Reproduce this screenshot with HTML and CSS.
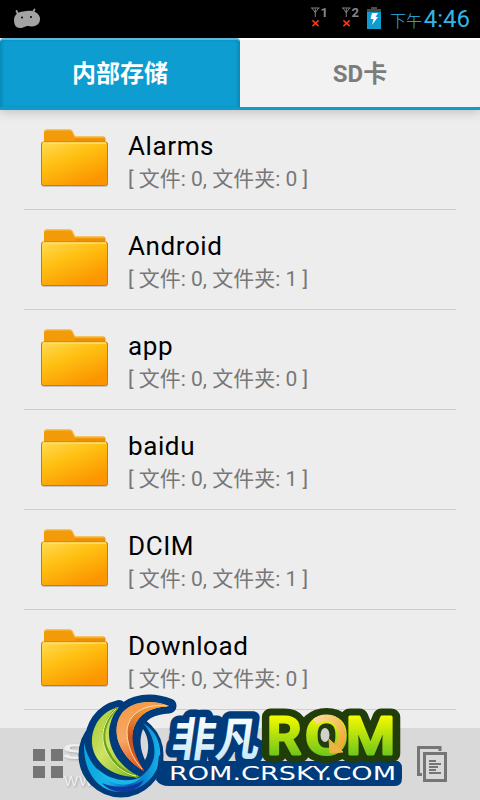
FILE: index.html
```html
<!DOCTYPE html>
<html lang="zh-CN">
<head>
<meta charset="utf-8">
<meta name="viewport" content="width=device-width, initial-scale=1">
<title>内部存储</title>
<link rel="stylesheet" href="styles.css">
</head>
<body>

<header class="status-bar">
  <svg class="robot" width="28" height="22" viewBox="0 0 28 22">
    <path d="M1 12C1 7 5 4 10 3.500C15 2.500 20 2.500 23 4.500C27 7 28 11 26 15C24 18 20 19 15 18C12 18 11 20 7 20C3 20 1 17 1 12Z" fill="#a3a3a3"/>
    <path d="M5 6L3.500 3M20 4L21.500 1.500" stroke="#a3a3a3" stroke-width="1.800" stroke-linecap="round"/>
    <circle cx="9" cy="9.500" r="1"/>
    <circle cx="18" cy="9" r="1"/>
  </svg>
  <div class="signal">
    <svg width="10" height="22" viewBox="0 0 10 22" fill="none">
      <path d="M0 .5H9M1 .5L4.500 5.500L8 .5M4.500 1V10" stroke="#858585"/>
      <path d="M1.500 13.500L8 19.500M8 13.500L1.500 19.500" stroke="#ff3a18" stroke-width="1.500"/>
    </svg>
    <span>1</span>
  </div>
  <div class="signal second">
    <svg width="10" height="22" viewBox="0 0 10 22" fill="none">
      <path d="M0 .5H9M1 .5L4.500 5.500L8 .5M4.500 1V10" stroke="#858585"/>
      <path d="M1.500 13.500L8 19.500M8 13.500L1.500 19.500" stroke="#ff3a18" stroke-width="1.500"/>
    </svg>
    <span>2</span>
  </div>
  <svg class="battery" width="14" height="22" viewBox="0 0 14 22">
    <path d="M4 0H10V2H14V5H0V2H4Z" fill="#4b4b4b"/>
    <path d="M0 5H14V22H0Z" fill="#109bce"/>
    <path d="M5 6H11L8.500 10H11L5 18L6.500 12H3.500Z" fill="#fff"/>
  </svg>
  <div class="clock"><span class="period">下午</span><span class="time">4:46</span></div>
</header>

<nav class="tabs">
  <a class="tab active">内部存储</a>
  <a class="tab">SD卡</a>
</nav>

<svg width="0" height="0" class="defs">
  <defs>
    <linearGradient id="front" x1="0" y1="0" x2="0.600" y2="1">
      <stop offset="0" stop-color="#ffdb55"/>
      <stop offset="0.450" stop-color="#ffc012"/>
      <stop offset="1" stop-color="#fb9500"/>
    </linearGradient>
    <symbol id="folder" viewBox="0 0 70 62">
      <path d="M1 56Q1 59 4 59H65Q68 59 68 56Z" fill="#aaa" opacity="0.600"/>
      <path d="M4 17V4Q4 1.500 6.500 1.500H30Q32.500 1.500 33.500 5L35 8.500H63Q65.500 8.500 65.500 11V17Z" fill="#f39a08"/>
      <path d="M5 3.500Q5 2 7 2H30Q32 2 33 5L35 9H64" fill="none" stroke="#ffc24a"/>
      <path d="M35 12H65" stroke="#e38505"/>
      <rect x="1.500" y="14" width="66" height="43.500" rx="2" fill="url(#front)" stroke="#cf7b00"/>
      <path d="M3 15H66" stroke="#ffe272" stroke-width="1.500"/>
    </symbol>
  </defs>
</svg>

<main class="list">
  <div class="row">
    <svg class="folder"><use href="#folder"/></svg>
    <div class="info"><div class="name">Alarms</div><div class="count">[ 文件: 0, 文件夹: 0 ]</div></div>
  </div>
  <div class="row">
    <svg class="folder"><use href="#folder"/></svg>
    <div class="info"><div class="name">Android</div><div class="count">[ 文件: 0, 文件夹: 1 ]</div></div>
  </div>
  <div class="row">
    <svg class="folder"><use href="#folder"/></svg>
    <div class="info"><div class="name">app</div><div class="count">[ 文件: 0, 文件夹: 0 ]</div></div>
  </div>
  <div class="row">
    <svg class="folder"><use href="#folder"/></svg>
    <div class="info"><div class="name">baidu</div><div class="count">[ 文件: 0, 文件夹: 1 ]</div></div>
  </div>
  <div class="row">
    <svg class="folder"><use href="#folder"/></svg>
    <div class="info"><div class="name">DCIM</div><div class="count">[ 文件: 0, 文件夹: 1 ]</div></div>
  </div>
  <div class="row">
    <svg class="folder"><use href="#folder"/></svg>
    <div class="info"><div class="name">Download</div><div class="count">[ 文件: 0, 文件夹: 0 ]</div></div>
  </div>
</main>

<footer class="toolbar">
  <svg width="30" height="30" viewBox="0 0 30 30" fill="#757575">
    <path d="M0 0H12V12H0ZM18 0H30V12H18ZM0 17H12V29H0ZM18 17H30V29H18Z"/>
  </svg>
  <svg width="30" height="36" viewBox="0 0 30 36" fill="none" stroke="#757575">
    <path d="M23 5V1.500H1.500V28.500H5" stroke-width="3"/>
    <rect x="7.500" y="7.500" width="21" height="27" stroke-width="3"/>
    <path d="M12 15H19M12 18H24M12 21H21M12 24H19M12 27H24" stroke-width="2"/>
  </svg>
</footer>

<!-- site logo over the bottom of the list -->
<svg class="logo" width="360" height="110" viewBox="60 690 360 110">
  <defs>
    <linearGradient id="green" x1="0" y1="0" x2="1" y2="1">
      <stop offset="0" stop-color="#a2cc2e"/>
      <stop offset="0.450" stop-color="#cde263"/>
      <stop offset="1" stop-color="#7cb514"/>
    </linearGradient>
    <linearGradient id="orange" x1="0.300" y1="0" x2="0.500" y2="1">
      <stop offset="0" stop-color="#f59a45"/>
      <stop offset="0.500" stop-color="#f6a866"/>
      <stop offset="1" stop-color="#e0480f"/>
    </linearGradient>
    <linearGradient id="rust" x1="0.300" y1="0" x2="0.300" y2="1">
      <stop offset="0" stop-color="#f99f3c"/>
      <stop offset="0.500" stop-color="#c9541d"/>
      <stop offset="1" stop-color="#f0541a"/>
    </linearGradient>
    <linearGradient id="blue" x1="0" y1="0" x2="1" y2="0">
      <stop offset="0" stop-color="#0aa3dd"/>
      <stop offset="0.300" stop-color="#19b4e6"/>
      <stop offset="0.600" stop-color="#0a5fb8"/>
      <stop offset="1" stop-color="#14b4ec"/>
    </linearGradient>
    <linearGradient id="ice" x1="0" y1="0" x2="0" y2="1">
      <stop offset="0.200" stop-color="#fff"/>
      <stop offset="1" stop-color="#bde4f7"/>
    </linearGradient>
    <linearGradient id="lime" gradientUnits="userSpaceOnUse" x1="0" y1="716" x2="0" y2="756">
      <stop offset="0" stop-color="#f5fa00"/>
      <stop offset="1" stop-color="#6cc51b"/>
    </linearGradient>
    <linearGradient id="gold" x1="0" y1="0" x2="1" y2="1">
      <stop offset="0" stop-color="#fbdc95"/>
      <stop offset="1" stop-color="#f0a530"/>
    </linearGradient>
  </defs>

  <g class="watermark">
    <text x="62" y="759" font-size="22" font-weight="bold" textLength="26" lengthAdjust="spacingAndGlyphs">S</text>
    <text x="64" y="786" font-size="15" textLength="44">WWW</text>
  </g>

  <!-- swirl -->
  <g stroke="#003c7b" stroke-linejoin="round">
    <circle cx="121" cy="755" r="38" fill="#003c7b" stroke-width="9"/>
    <path d="M119 707C101 711 91 727 92 744C94 763 112 778 140 777Z" fill="#003c7b" stroke-width="14"/>
    <path d="M169 706C152 699 132 701 122 713C110 730 118 756 144 771C130 750 130 738 134 727C139 714 150 707 169 706Z" fill="#003c7b" stroke-width="15"/>
    <path d="M143 729C149 737 150 751 145 760C140 749 139 739 143 729Z" fill="#d9d9d9" stroke="none"/>
  </g>
  <path d="M143 723C157 731 163 747 159 763C154 781 138 792 120 792C99 792 83 773 84 743C89 766 104 780 124 782C139 781 151 771 154 757C156 744 151 732 143 723Z" fill="url(#blue)"/>
  <path d="M97 768C107 779 126 784 142 777C129 790 106 786 97 768Z" fill="#19b9e7"/>
  <path d="M102 783C113 788 130 789 144 780C134 797 111 794 102 783Z" fill="#1038a0"/>
  <path d="M119 707C101 711 91 727 92 744C94 763 112 778 140 777C119 767 108 748 109 731C110 721 114 713 119 707Z" fill="url(#green)"/>
  <path d="M117 708C102 723 101 739 108 752C114 765 126 774 138 777" fill="none" stroke="#6fa418" stroke-width="3"/>
  <path d="M116 709C101 723 100 740 107 753C113 765 124 774 136 776" fill="none" stroke="#f2f8b5"/>
  <path d="M169 706C152 699 132 701 122 713C110 730 118 756 144 771C130 750 130 738 134 727C139 714 150 707 169 706Z" fill="#f6a866" stroke="#003c7b" stroke-width="6" paint-order="stroke"/>
  <path d="M169 706C152 699 132 701 122 713C110 730 118 756 144 771C130 750 130 738 134 727C139 714 150 707 169 706Z" fill="url(#orange)"/>
  <path d="M169 706C145 703 128 714 127 731C127 746 133 759 144 771C132 752 131 738 134 727C139 714 150 707 169 706Z" fill="url(#rust)"/>
  <path d="M167 706C144 703 128 714 127 731C127 746 133 759 142 769" fill="none" stroke="#ffdba9"/>

  <g stroke-linejoin="round">
    <path d="M164 761H398Q402 763 402 768V778Q402 786 395 786H169Q160 786 156 780L159 755Z" fill="#003c7b"/>
    <text class="company" transform="translate(170 756) skewX(-8)" font-size="46" textLength="88" lengthAdjust="spacingAndGlyphs">非凡</text>
    <g class="rom" fill="#213d09" stroke="#213d09" stroke-width="17">
      <text x="267" y="754" textLength="34" lengthAdjust="spacingAndGlyphs">R</text>
      <text x="305" y="754" textLength="43" lengthAdjust="spacingAndGlyphs">O</text>
      <text x="346" y="754" textLength="49" lengthAdjust="spacingAndGlyphs">M</text>
    </g>
    <g class="rom" fill="url(#lime)" stroke="url(#lime)" stroke-width="3">
      <text x="267" y="754" textLength="34" lengthAdjust="spacingAndGlyphs">R</text>
      <text x="305" y="754" textLength="43" lengthAdjust="spacingAndGlyphs">O</text>
      <text x="346" y="754" textLength="49" lengthAdjust="spacingAndGlyphs">M</text>
    </g>
    <ellipse cx="325" cy="735" rx="4.500" ry="7" fill="#cfd1cc"/>
    <path d="M315 722C322 716 333 717 338 723C344 730 343 741 338 748" fill="none" stroke="url(#gold)" stroke-width="7"/>
    <path d="M329 739L343 752L330 753Z" fill="#efb246" stroke="#efb246"/>
    <text class="domain" x="169" y="779.500" textLength="227" lengthAdjust="spacingAndGlyphs">ROM.CRSKY.COM</text>
  </g>
</svg>

</body>
</html>
```
FILE: styles.css
```css
* {
  box-sizing: border-box;
}

body {
  margin: 0;
  width: 480px;
  height: 800px;
  overflow: hidden;
  display: flex;
  flex-direction: column;
  position: relative;
  background: #ededed;
  font-family: Roboto, "Noto Sans CJK SC", sans-serif;
}

.defs {
  position: absolute;
}

/* Status bar */
.status-bar {
  height: 38px;
  flex: none;
  display: flex;
  align-items: flex-start;
  padding: 7px 10px 0 13px;
  background: #000;
}

.robot {
  margin-top: 1px;
}

.signal {
  width: 17px;
  display: flex;
  margin-left: auto;
  color: #888;
  font-size: 13px;
  font-weight: bold;
  line-height: 11px;
}

.signal.second {
  margin-left: 14px;
}

.battery {
  margin-left: 8px;
}

.clock {
  width: 80px;
  margin-left: 9px;
  display: flex;
  align-items: baseline;
  justify-content: space-between;
  white-space: nowrap;
  color: #33b5e5;
  line-height: 24px;
}

.period {
  font-size: 16px;
  font-weight: 300;
}

.time {
  font-size: 24px;
}

/* Tabs */
.tabs {
  height: 72px;
  flex: none;
  display: flex;
  background: #f2f2f2;
  box-shadow: 0 2px 10px rgba(0, 0, 0, 0.2);
}

.tab {
  flex: 1;
  display: flex;
  align-items: center;
  justify-content: center;
  padding-bottom: 5px;
  border-top: 2px solid #fff;
  border-bottom: 3px solid #109bce;
  color: #7c7c7c;
  font-size: 24px;
  font-weight: bold;
}

.tab.active {
  background: #0d9dd0;
  border-top-color: #5fb8dc;
  border-radius: 4px 4px 0 0;
  box-shadow: inset 3px 0 3px -1px #0a89b6, inset -3px 0 3px -1px #0a89b6;
  color: #fff;
}

/* Folder list */
.list {
  flex: 1;
  padding: 0 24px;
}

.row {
  height: 100px;
  display: flex;
  padding: 18px 0 0 16px;
  border-bottom: 1px solid #cdcdcd;
}

.folder {
  width: 70px;
  height: 62px;
  margin-right: 18px;
}

.name {
  font-size: 26px;
  line-height: 36px;
  letter-spacing: 0.6px;
  color: #000;
}

.count {
  font-size: 21px;
  line-height: 30px;
  color: #777;
  white-space: nowrap;
}

/* Bottom toolbar */
.toolbar {
  height: 72px;
  flex: none;
  display: flex;
  align-items: center;
  justify-content: space-between;
  padding: 0 33px;
  background: #d9d9d9;
}

.logo {
  position: absolute;
  left: 60px;
  top: 690px;
}

.watermark {
  font-family: "Liberation Sans", sans-serif;
  fill: #eee;
  filter: drop-shadow(1px 1px 1px #aaa);
}

.company {
  font-family: "Noto Sans CJK SC", sans-serif;
  font-weight: bold;
  fill: url(#ice);
  stroke: #003c7b;
  stroke-width: 15px;
  paint-order: stroke;
}

.rom {
  font-family: Roboto, sans-serif;
  font-size: 51px;
  font-weight: 500;
}

.domain {
  font-family: "DejaVu Sans", sans-serif;
  font-size: 20px;
  fill: #fff;
}
```
